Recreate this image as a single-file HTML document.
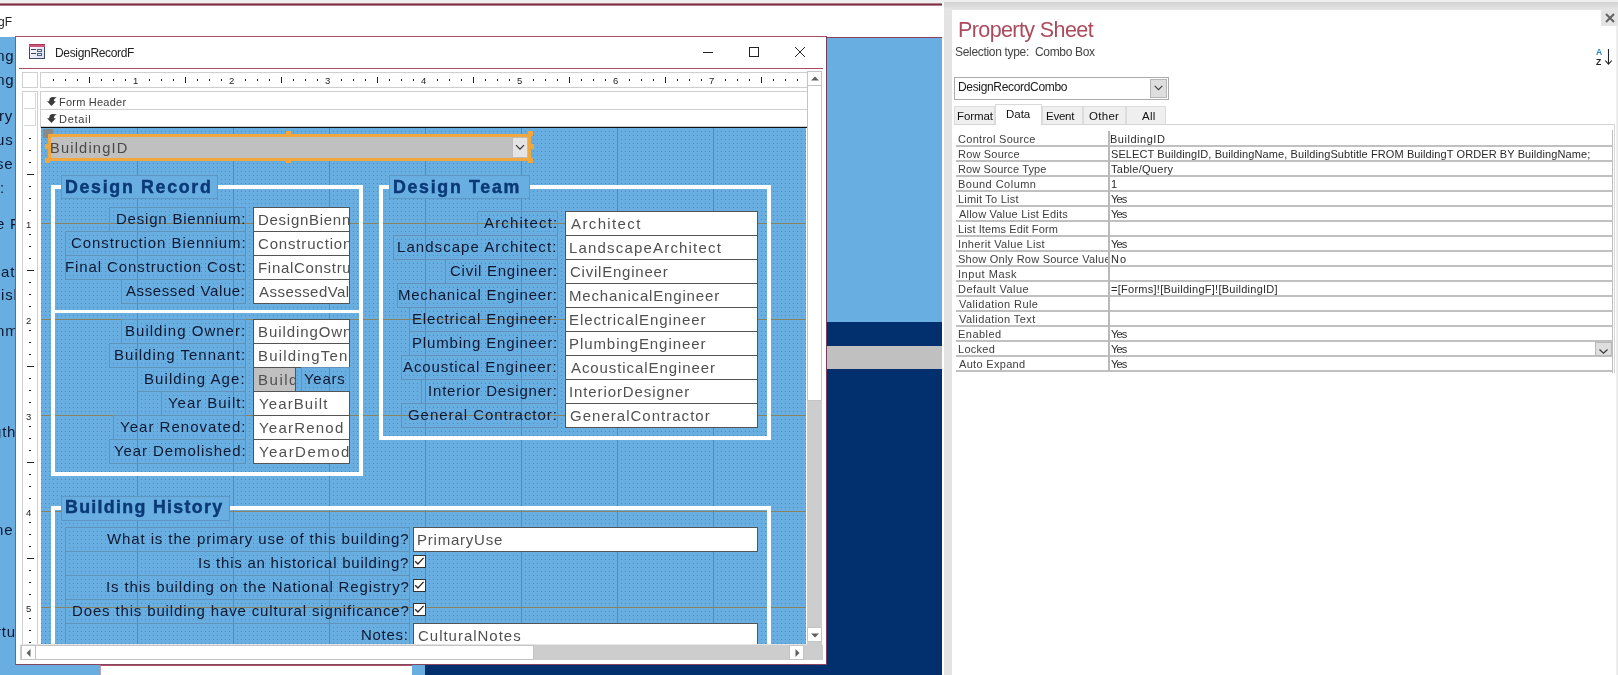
<!DOCTYPE html><html lang="en"><head><meta charset="utf-8"><title>DesignRecordF - Property Sheet</title><style>

html,body{margin:0;padding:0;overflow:hidden}
body{width:1618px;height:675px;overflow:hidden;background:#fff;position:relative;font-family:"Liberation Sans", sans-serif;}
div,span,svg{position:absolute;box-sizing:border-box}
span.t{white-space:pre;line-height:1;display:block;will-change:transform}
i.b{display:inline-block;width:0;height:0}

</style></head><body>
<div style="left:0px;top:0px;width:1618px;height:3px;background:#efefef"></div>
<div style="left:0px;top:3px;width:942px;height:1px;background:#b1818d"></div>
<div style="left:0px;top:4px;width:942px;height:1px;background:#7f2a40"></div>
<div style="left:0px;top:5px;width:942px;height:1px;background:#b27f8c"></div>
<div style="left:0px;top:6px;width:942px;height:31px;background:#fff"></div>
<div style="left:0px;top:37px;width:942px;height:638px;background:#69aee0"></div>
<div style="left:827px;top:37px;width:115px;height:1px;background:#8d4058"></div>
<div style="left:425px;top:322px;width:517px;height:353px;background:#022f6d"></div>
<div style="left:425px;top:346px;width:517px;height:23px;background:#c0c0c0"></div>
<div style="left:100px;top:665px;width:312px;height:10px;background:#fff;border-top:1px solid #a8505f;border-left:1px solid #c8a0a8"></div>
<div style="left:0px;top:37px;width:15px;height:638px;overflow:hidden">
<span class="t" style="left:0.00px;top:11.00px;font-size:15px;color:#0e1832;left:auto;right:1px;letter-spacing:0.8px;">ing</span>
<span class="t" style="left:0.00px;top:35.00px;font-size:15px;color:#0e1832;left:auto;right:1px;letter-spacing:0.8px;">ing</span>
<span class="t" style="left:0.00px;top:71.00px;font-size:15px;color:#0e1832;left:auto;right:1.5px;letter-spacing:0.8px;">ry</span>
<span class="t" style="left:0.00px;top:95.00px;font-size:15px;color:#0e1832;left:auto;right:1.5px;letter-spacing:0.8px;">us</span>
<span class="t" style="left:0.00px;top:119.00px;font-size:15px;color:#0e1832;left:auto;right:1.5px;letter-spacing:0.8px;">se</span>
<span class="t" style="left:0.00px;top:143.00px;font-size:15px;color:#0e1832;left:auto;right:10.5px;letter-spacing:0.8px;">:</span>
<span class="t" style="left:0.00px;top:179.00px;font-size:15px;color:#0e1832;left:auto;right:-9.5px;letter-spacing:0.8px;">e Fi</span>
<span class="t" style="left:0.00px;top:227.00px;font-size:15px;color:#0e1832;left:auto;right:0px;letter-spacing:0.8px;">at</span>
<span class="t" style="left:0.00px;top:250.00px;font-size:15px;color:#0e1832;left:auto;right:-7.5px;letter-spacing:0.8px;">ish</span>
<span class="t" style="left:0.00px;top:286.00px;font-size:15px;color:#0e1832;left:auto;right:-3px;letter-spacing:0.8px;">nm</span>
<span class="t" style="left:0.00px;top:387.00px;font-size:15px;color:#0e1832;left:auto;right:-1px;letter-spacing:0.8px;">gth</span>
<span class="t" style="left:0.00px;top:485.00px;font-size:15px;color:#0e1832;left:auto;right:1.5px;letter-spacing:0.8px;">ne</span>
<span class="t" style="left:0.00px;top:587.00px;font-size:15px;color:#0e1832;left:auto;right:-0.5px;letter-spacing:0.8px;">rtu</span></div>
<div style="left:15px;top:36px;width:812px;height:629px;background:#fff;border:1px solid #a8505f;border-right-color:#7a3d5c;border-bottom-color:#8a4560;"><svg style="left:13px;top:7px" width="16" height="15" viewBox="0 0 16 15">
<defs><linearGradient id="ig" x1="0" y1="0" x2="1" y2="1"><stop offset="0" stop-color="#fcfcff"/><stop offset="1" stop-color="#d9dcec"/></linearGradient></defs>
<rect x="0.5" y="0.5" width="15" height="14" fill="url(#ig)" stroke="#3f4a66"/>
<rect x="0" y="0" width="16" height="3" fill="#c9587a"/><rect x="0" y="0" width="16" height="1" fill="#a8395b"/>
<rect x="2" y="5" width="5" height="1" fill="#3c465c"/><rect x="2" y="9" width="5" height="1" fill="#3c465c"/>
<rect x="8.5" y="5.5" width="4" height="2" fill="#e8edf6" stroke="#4a6486"/><rect x="8.5" y="9.5" width="4" height="2" fill="#e8edf6" stroke="#4a6486"/>
</svg>
<svg style="left:680px;top:5px" width="120" height="22" viewBox="0 0 120 22">
<path d="M7 10.5H17" stroke="#222" stroke-width="1" fill="none"/>
<rect x="53.5" y="5.5" width="9" height="9" stroke="#222" stroke-width="1" fill="none"/>
<path d="M99 5L109 15M109 5L99 15" stroke="#222" stroke-width="1" fill="none"/>
</svg>
<div style="left:3px;top:31px;width:804px;height:1px;background:#a8505f"></div>
<div style="left:6px;top:35px;width:16px;height:16px;background:#fff;border:1px solid #cfcfcf"></div>
<div style="left:24px;top:35px;width:767px;height:16px;background:#fff;border:1px solid #cfcfcf;border-right:none;overflow:hidden"><svg style="left:-1px;top:-1px" width="767" height="16"><rect x="13" y="7" width="1" height="2" fill="#222"/><rect x="25" y="7" width="1" height="2" fill="#222"/><rect x="37" y="7" width="1" height="2" fill="#222"/><rect x="49" y="5" width="1" height="6" fill="#222"/><rect x="61" y="7" width="1" height="2" fill="#222"/><rect x="73" y="7" width="1" height="2" fill="#222"/><rect x="85" y="7" width="1" height="2" fill="#222"/><rect x="109" y="7" width="1" height="2" fill="#222"/><rect x="121" y="7" width="1" height="2" fill="#222"/><rect x="133" y="7" width="1" height="2" fill="#222"/><rect x="145" y="5" width="1" height="6" fill="#222"/><rect x="157" y="7" width="1" height="2" fill="#222"/><rect x="169" y="7" width="1" height="2" fill="#222"/><rect x="181" y="7" width="1" height="2" fill="#222"/><rect x="205" y="7" width="1" height="2" fill="#222"/><rect x="217" y="7" width="1" height="2" fill="#222"/><rect x="229" y="7" width="1" height="2" fill="#222"/><rect x="241" y="5" width="1" height="6" fill="#222"/><rect x="253" y="7" width="1" height="2" fill="#222"/><rect x="265" y="7" width="1" height="2" fill="#222"/><rect x="277" y="7" width="1" height="2" fill="#222"/><rect x="301" y="7" width="1" height="2" fill="#222"/><rect x="313" y="7" width="1" height="2" fill="#222"/><rect x="325" y="7" width="1" height="2" fill="#222"/><rect x="337" y="5" width="1" height="6" fill="#222"/><rect x="349" y="7" width="1" height="2" fill="#222"/><rect x="361" y="7" width="1" height="2" fill="#222"/><rect x="373" y="7" width="1" height="2" fill="#222"/><rect x="397" y="7" width="1" height="2" fill="#222"/><rect x="409" y="7" width="1" height="2" fill="#222"/><rect x="421" y="7" width="1" height="2" fill="#222"/><rect x="433" y="5" width="1" height="6" fill="#222"/><rect x="445" y="7" width="1" height="2" fill="#222"/><rect x="457" y="7" width="1" height="2" fill="#222"/><rect x="469" y="7" width="1" height="2" fill="#222"/><rect x="493" y="7" width="1" height="2" fill="#222"/><rect x="505" y="7" width="1" height="2" fill="#222"/><rect x="517" y="7" width="1" height="2" fill="#222"/><rect x="529" y="5" width="1" height="6" fill="#222"/><rect x="541" y="7" width="1" height="2" fill="#222"/><rect x="553" y="7" width="1" height="2" fill="#222"/><rect x="565" y="7" width="1" height="2" fill="#222"/><rect x="589" y="7" width="1" height="2" fill="#222"/><rect x="601" y="7" width="1" height="2" fill="#222"/><rect x="613" y="7" width="1" height="2" fill="#222"/><rect x="625" y="5" width="1" height="6" fill="#222"/><rect x="637" y="7" width="1" height="2" fill="#222"/><rect x="649" y="7" width="1" height="2" fill="#222"/><rect x="661" y="7" width="1" height="2" fill="#222"/><rect x="685" y="7" width="1" height="2" fill="#222"/><rect x="697" y="7" width="1" height="2" fill="#222"/><rect x="709" y="7" width="1" height="2" fill="#222"/><rect x="721" y="5" width="1" height="6" fill="#222"/><rect x="733" y="7" width="1" height="2" fill="#222"/><rect x="745" y="7" width="1" height="2" fill="#222"/><rect x="757" y="7" width="1" height="2" fill="#222"/></svg>
<span class="t" style="left:93.00px;top:4.00px;font-size:9.5px;color:#222;margin:-1px 0 0 -1px;">1</span>
<span class="t" style="left:189.00px;top:4.00px;font-size:9.5px;color:#222;margin:-1px 0 0 -1px;">2</span>
<span class="t" style="left:285.00px;top:4.00px;font-size:9.5px;color:#222;margin:-1px 0 0 -1px;">3</span>
<span class="t" style="left:381.00px;top:4.00px;font-size:9.5px;color:#222;margin:-1px 0 0 -1px;">4</span>
<span class="t" style="left:477.00px;top:4.00px;font-size:9.5px;color:#222;margin:-1px 0 0 -1px;">5</span>
<span class="t" style="left:573.00px;top:4.00px;font-size:9.5px;color:#222;margin:-1px 0 0 -1px;">6</span>
<span class="t" style="left:669.00px;top:4.00px;font-size:9.5px;color:#222;margin:-1px 0 0 -1px;">7</span></div>
<div style="left:6px;top:54px;width:16px;height:554px;background:#fff;border:1px solid #cfcfcf"></div>
<div style="left:8px;top:56px;width:12px;height:16px;background:#fff;border:1px solid #d8d8d8;border-top:none;border-left:none"></div>
<div style="left:8px;top:73px;width:12px;height:16px;background:#fff;border:1px solid #d8d8d8;border-top:none;border-left:none"></div>
<div style="left:24px;top:54px;width:767px;height:37px;background:#fff;border:1px solid #cfcfcf;border-right:none;border-bottom:none"></div>
<div style="left:25px;top:72px;width:766px;height:1px;background:#cfcfcf"></div>
<div style="left:25px;top:89px;width:766px;height:1px;background:#cfcfcf"></div>
<div style="left:25px;top:90px;width:766px;height:1px;background:#111"></div>
<svg style="left:31px;top:60px" width="11" height="10" viewBox="0 0 11 10"><path d="M0 4.3 L2.2 4.3 C2.1 2 3.2 0.2 5.2 0 L9.9 0.2 C8 0.9 6.9 2.2 6.8 4.3 L8.9 4.3 L4.5 8.9 Z" fill="#3a3a3a"/></svg>
<svg style="left:31px;top:77px" width="11" height="10" viewBox="0 0 11 10"><path d="M0 4.3 L2.2 4.3 C2.1 2 3.2 0.2 5.2 0 L9.9 0.2 C8 0.9 6.9 2.2 6.8 4.3 L8.9 4.3 L4.5 8.9 Z" fill="#3a3a3a"/></svg>
<svg style="left:7px;top:91px" width="14" height="516"><rect x="6" y="10" width="2" height="1" fill="#222"/><rect x="6" y="22" width="2" height="1" fill="#222"/><rect x="6" y="34" width="2" height="1" fill="#222"/><rect x="4" y="46" width="7" height="1" fill="#222"/><rect x="6" y="58" width="2" height="1" fill="#222"/><rect x="6" y="70" width="2" height="1" fill="#222"/><rect x="6" y="82" width="2" height="1" fill="#222"/><rect x="6" y="106" width="2" height="1" fill="#222"/><rect x="6" y="118" width="2" height="1" fill="#222"/><rect x="6" y="130" width="2" height="1" fill="#222"/><rect x="4" y="142" width="7" height="1" fill="#222"/><rect x="6" y="154" width="2" height="1" fill="#222"/><rect x="6" y="166" width="2" height="1" fill="#222"/><rect x="6" y="178" width="2" height="1" fill="#222"/><rect x="6" y="202" width="2" height="1" fill="#222"/><rect x="6" y="214" width="2" height="1" fill="#222"/><rect x="6" y="226" width="2" height="1" fill="#222"/><rect x="4" y="238" width="7" height="1" fill="#222"/><rect x="6" y="250" width="2" height="1" fill="#222"/><rect x="6" y="262" width="2" height="1" fill="#222"/><rect x="6" y="274" width="2" height="1" fill="#222"/><rect x="6" y="298" width="2" height="1" fill="#222"/><rect x="6" y="310" width="2" height="1" fill="#222"/><rect x="6" y="322" width="2" height="1" fill="#222"/><rect x="4" y="334" width="7" height="1" fill="#222"/><rect x="6" y="346" width="2" height="1" fill="#222"/><rect x="6" y="358" width="2" height="1" fill="#222"/><rect x="6" y="370" width="2" height="1" fill="#222"/><rect x="6" y="394" width="2" height="1" fill="#222"/><rect x="6" y="406" width="2" height="1" fill="#222"/><rect x="6" y="418" width="2" height="1" fill="#222"/><rect x="4" y="430" width="7" height="1" fill="#222"/><rect x="6" y="442" width="2" height="1" fill="#222"/><rect x="6" y="454" width="2" height="1" fill="#222"/><rect x="6" y="466" width="2" height="1" fill="#222"/><rect x="6" y="490" width="2" height="1" fill="#222"/><rect x="6" y="502" width="2" height="1" fill="#222"/><rect x="6" y="514" width="2" height="1" fill="#222"/></svg>
<div style="left:25px;top:91px;width:765px;height:516px;background:#69aee0;overflow:hidden"><svg style="left:0;top:0" width="765" height="516">
<defs><pattern id="dots" x="0" y="-1" width="4" height="4" patternUnits="userSpaceOnUse"><rect x="0" y="0" width="1" height="1" fill="#5f7f99" fill-opacity="0.8"/></pattern></defs>
<rect width="765" height="516" fill="url(#dots)"/>
<rect x="96" y="0" width="1" height="516" fill="#888262"/><rect x="192" y="0" width="1" height="516" fill="#888262"/><rect x="288" y="0" width="1" height="516" fill="#888262"/><rect x="384" y="0" width="1" height="516" fill="#888262"/><rect x="480" y="0" width="1" height="516" fill="#888262"/><rect x="576" y="0" width="1" height="516" fill="#888262"/><rect x="672" y="0" width="1" height="516" fill="#888262"/>
<rect x="0" y="95" width="765" height="1" fill="#888262"/><rect x="0" y="191" width="765" height="1" fill="#888262"/><rect x="0" y="287" width="765" height="1" fill="#888262"/><rect x="0" y="383" width="765" height="1" fill="#888262"/><rect x="0" y="479" width="765" height="1" fill="#888262"/>
</svg>
<div style="left:10px;top:57px;width:312px;height:291px;border:4px solid #fff"></div>
<div style="left:10px;top:182px;width:312px;height:3px;background:#fff"></div>
<div style="left:338px;top:57px;width:392px;height:255px;border:4px solid #fff"></div>
<div style="left:10px;top:378px;width:720px;height:194px;border:4px solid #fff"></div>
<div style="left:20px;top:47px;width:157px;height:24px;background:#69aee0;border:1px solid #5f97c4"></div>
<div style="left:348px;top:47px;width:141px;height:24px;background:#69aee0;border:1px solid #5f97c4"></div>
<div style="left:20px;top:368px;width:169px;height:25px;background:#69aee0;border:1px solid #5f97c4"></div>
<div style="left:68px;top:79px;width:137px;height:25px;border:1px solid #6292bb"></div>
<div style="left:212px;top:79px;width:97px;height:25px;background:#fff;border:1px solid #545454;overflow:hidden">
<span class="t" style="left:3.63px;top:3.80px;font-size:15px;color:#505050;letter-spacing:0.722px;">DesignBiennium</span></div>
<div style="left:24px;top:103px;width:181px;height:25px;border:1px solid #6292bb"></div>
<div style="left:212px;top:103px;width:97px;height:25px;background:#fff;border:1px solid #545454;overflow:hidden">
<span class="t" style="left:4.10px;top:3.80px;font-size:15px;color:#505050;letter-spacing:0.835px;">ConstructionBiennium</span></div>
<div style="left:24px;top:127px;width:181px;height:25px;border:1px solid #6292bb"></div>
<div style="left:212px;top:127px;width:97px;height:25px;background:#fff;border:1px solid #545454;overflow:hidden">
<span class="t" style="left:3.63px;top:3.80px;font-size:15px;color:#505050;letter-spacing:0.695px;">FinalConstructionCost</span></div>
<div style="left:80px;top:151px;width:125px;height:25px;border:1px solid #6292bb"></div>
<div style="left:212px;top:151px;width:97px;height:25px;background:#fff;border:1px solid #545454;overflow:hidden">
<span class="t" style="left:4.80px;top:3.80px;font-size:15px;color:#505050;letter-spacing:0.459px;">AssessedValue</span></div>
<div style="left:80px;top:191px;width:125px;height:25px;border:1px solid #6292bb"></div>
<div style="left:212px;top:191px;width:97px;height:25px;background:#fff;border:1px solid #545454;overflow:hidden">
<span class="t" style="left:3.63px;top:3.80px;font-size:15px;color:#505050;letter-spacing:0.924px;">BuildingOwner</span></div>
<div style="left:68px;top:215px;width:137px;height:25px;border:1px solid #6292bb"></div>
<div style="left:212px;top:215px;width:97px;height:25px;background:#fff;border:1px solid #545454;overflow:hidden">
<span class="t" style="left:3.63px;top:3.80px;font-size:15px;color:#505050;letter-spacing:1.186px;">BuildingTennant</span></div>
<div style="left:96px;top:239px;width:109px;height:25px;border:1px solid #6292bb"></div>
<div style="left:212px;top:239px;width:43px;height:25px;background:#c0c0c0;border:1px solid #545454;overflow:hidden">
<span class="t" style="left:3.63px;top:3.80px;font-size:15px;color:#505050;letter-spacing:1.516px;">BuildingAge</span></div>
<div style="left:260px;top:239px;width:49px;height:25px;border:1px solid #6292bb"></div>
<div style="left:120px;top:263px;width:85px;height:25px;border:1px solid #6292bb"></div>
<div style="left:212px;top:263px;width:97px;height:25px;background:#fff;border:1px solid #545454;overflow:hidden">
<span class="t" style="left:4.57px;top:3.80px;font-size:15px;color:#505050;letter-spacing:1.112px;">YearBuilt</span></div>
<div style="left:72px;top:287px;width:133px;height:25px;border:1px solid #6292bb"></div>
<div style="left:212px;top:287px;width:97px;height:25px;background:#fff;border:1px solid #545454;overflow:hidden">
<span class="t" style="left:4.57px;top:3.80px;font-size:15px;color:#505050;letter-spacing:1.221px;">YearRenod</span></div>
<div style="left:68px;top:311px;width:137px;height:25px;border:1px solid #6292bb"></div>
<div style="left:212px;top:311px;width:97px;height:25px;background:#fff;border:1px solid #545454;overflow:hidden">
<span class="t" style="left:4.57px;top:3.80px;font-size:15px;color:#505050;letter-spacing:1.452px;">YearDemod</span></div>
<div style="left:436px;top:83px;width:81px;height:25px;border:1px solid #6292bb"></div>
<div style="left:524px;top:83px;width:193px;height:25px;background:#fff;border:1px solid #545454;overflow:hidden">
<span class="t" style="left:4.60px;top:3.70px;font-size:15px;color:#505050;letter-spacing:1.375px;">Architect</span></div>
<div style="left:352px;top:107px;width:165px;height:25px;border:1px solid #6292bb"></div>
<div style="left:524px;top:107px;width:193px;height:25px;background:#fff;border:1px solid #545454;overflow:hidden">
<span class="t" style="left:3.43px;top:3.70px;font-size:15px;color:#505050;letter-spacing:1.181px;">LandscapeArchitect</span></div>
<div style="left:404px;top:131px;width:113px;height:25px;border:1px solid #6292bb"></div>
<div style="left:524px;top:131px;width:193px;height:25px;background:#fff;border:1px solid #545454;overflow:hidden">
<span class="t" style="left:3.90px;top:3.70px;font-size:15px;color:#505050;letter-spacing:0.775px;">CivilEngineer</span></div>
<div style="left:356px;top:155px;width:161px;height:25px;border:1px solid #6292bb"></div>
<div style="left:524px;top:155px;width:193px;height:25px;background:#fff;border:1px solid #545454;overflow:hidden">
<span class="t" style="left:3.43px;top:3.70px;font-size:15px;color:#505050;letter-spacing:0.837px;">MechanicalEngineer</span></div>
<div style="left:368px;top:179px;width:149px;height:25px;border:1px solid #6292bb"></div>
<div style="left:524px;top:179px;width:193px;height:25px;background:#fff;border:1px solid #545454;overflow:hidden">
<span class="t" style="left:3.43px;top:3.70px;font-size:15px;color:#505050;letter-spacing:0.915px;">ElectricalEngineer</span></div>
<div style="left:368px;top:203px;width:149px;height:25px;border:1px solid #6292bb"></div>
<div style="left:524px;top:203px;width:193px;height:25px;background:#fff;border:1px solid #545454;overflow:hidden">
<span class="t" style="left:3.43px;top:3.70px;font-size:15px;color:#505050;letter-spacing:0.924px;">PlumbingEngineer</span></div>
<div style="left:360px;top:227px;width:157px;height:25px;border:1px solid #6292bb"></div>
<div style="left:524px;top:227px;width:193px;height:25px;background:#fff;border:1px solid #545454;overflow:hidden">
<span class="t" style="left:4.60px;top:3.70px;font-size:15px;color:#505050;letter-spacing:0.916px;">AcousticalEngineer</span></div>
<div style="left:380px;top:251px;width:137px;height:25px;border:1px solid #6292bb"></div>
<div style="left:524px;top:251px;width:193px;height:25px;background:#fff;border:1px solid #545454;overflow:hidden">
<span class="t" style="left:3.43px;top:3.70px;font-size:15px;color:#505050;letter-spacing:0.895px;">InteriorDesigner</span></div>
<div style="left:360px;top:275px;width:157px;height:25px;border:1px solid #6292bb"></div>
<div style="left:524px;top:275px;width:193px;height:25px;background:#fff;border:1px solid #545454;overflow:hidden">
<span class="t" style="left:3.90px;top:3.70px;font-size:15px;color:#505050;letter-spacing:1.018px;">GeneralContractor</span></div>
<div style="left:24px;top:399px;width:345px;height:25px;border:1px solid #6292bb"></div>
<div style="left:24px;top:423px;width:345px;height:25px;border:1px solid #6292bb"></div>
<div style="left:372px;top:427px;width:13px;height:13px;background:#fff;border:1px solid #333"><svg style="left:0;top:0" width="11" height="11" viewBox="0 0 11 11"><path d="M1.2 5.2L3.9 8L9.6 1.9" stroke="#2e2626" stroke-width="1.3" fill="none"/></svg></div>
<div style="left:24px;top:447px;width:345px;height:25px;border:1px solid #6292bb"></div>
<div style="left:372px;top:451px;width:13px;height:13px;background:#fff;border:1px solid #333"><svg style="left:0;top:0" width="11" height="11" viewBox="0 0 11 11"><path d="M1.2 5.2L3.9 8L9.6 1.9" stroke="#2e2626" stroke-width="1.3" fill="none"/></svg></div>
<div style="left:24px;top:471px;width:345px;height:25px;border:1px solid #6292bb"></div>
<div style="left:372px;top:475px;width:13px;height:13px;background:#fff;border:1px solid #333"><svg style="left:0;top:0" width="11" height="11" viewBox="0 0 11 11"><path d="M1.2 5.2L3.9 8L9.6 1.9" stroke="#2e2626" stroke-width="1.3" fill="none"/></svg></div>
<div style="left:24px;top:495px;width:345px;height:25px;border:1px solid #6292bb"></div>
<div style="left:372px;top:399px;width:345px;height:25px;background:#fff;border:1px solid #545454;overflow:hidden">
<span class="t" style="left:3.33px;top:3.80px;font-size:15px;color:#505050;letter-spacing:0.771px;">PrimaryUse</span></div>
<div style="left:372px;top:495px;width:345px;height:25px;background:#fff;border:1px solid #545454;overflow:hidden">
<span class="t" style="left:4.10px;top:3.80px;font-size:15px;color:#505050;letter-spacing:0.983px;">CulturalNotes</span></div>
<div style="left:2px;top:1px;width:10px;height:9px;background:#8a8a8a"></div>
<div style="left:7px;top:6px;width:483px;height:27px;background:#c0c0c0;border:3px solid #f2a73d"></div>
<div style="left:471px;top:9px;width:16px;height:21px;background:#e4e4e4;border:1px solid #bdbdbd"><svg style="left:2px;top:6px" width="10" height="7" viewBox="0 0 10 7"><path d="M1 1.2L5 5.2L9 1.2" stroke="#333" stroke-width="1.2" fill="none"/></svg></div>
<div style="left:245px;top:3px;width:5px;height:5px;background:#f2a73d"></div>
<div style="left:245px;top:30px;width:5px;height:5px;background:#f2a73d"></div>
<div style="left:487px;top:3px;width:5px;height:5px;background:#f2a73d"></div>
<div style="left:488px;top:16px;width:5px;height:5px;background:#f2a73d"></div>
<div style="left:487px;top:30px;width:5px;height:5px;background:#f2a73d"></div>
<div style="left:4px;top:16px;width:5px;height:5px;background:#f2a73d"></div>
<div style="left:4px;top:30px;width:5px;height:5px;background:#f2a73d"></div>
<span class="t" style="left:24.19px;top:50.50px;font-size:17.8px;color:#0a3977;font-weight:700;letter-spacing:1.695px;-webkit-text-stroke:0.45px #0a3977;">Design Record</span>
<span class="t" style="left:352.39px;top:50.50px;font-size:17.8px;color:#0a3977;font-weight:700;letter-spacing:1.693px;-webkit-text-stroke:0.45px #0a3977;">Design Team</span>
<span class="t" style="left:24.19px;top:371.30px;font-size:17.8px;color:#0a3977;font-weight:700;letter-spacing:1.316px;-webkit-text-stroke:0.45px #0a3977;">Building History</span>
<span class="t" style="left:74.83px;top:82.80px;font-size:15px;color:#0e1832;letter-spacing:0.791px;">Design Biennium:</span>
<span class="t" style="left:29.60px;top:106.80px;font-size:15px;color:#0e1832;letter-spacing:0.932px;">Construction Biennium:</span>
<span class="t" style="left:23.63px;top:130.80px;font-size:15px;color:#0e1832;letter-spacing:0.894px;">Final Construction Cost:</span>
<span class="t" style="left:85.30px;top:154.80px;font-size:15px;color:#0e1832;letter-spacing:0.596px;">Assessed Value:</span>
<span class="t" style="left:84.13px;top:194.80px;font-size:15px;color:#0e1832;letter-spacing:1.017px;">Building Owner:</span>
<span class="t" style="left:72.83px;top:218.80px;font-size:15px;color:#0e1832;letter-spacing:1.021px;">Building Tennant:</span>
<span class="t" style="left:102.83px;top:242.80px;font-size:15px;color:#0e1832;letter-spacing:1.086px;">Building Age:</span>
<span class="t" style="left:263.27px;top:242.80px;font-size:15px;color:#0e1832;letter-spacing:0.724px;">Years</span>
<span class="t" style="left:126.77px;top:266.80px;font-size:15px;color:#0e1832;letter-spacing:0.967px;">Year Built:</span>
<span class="t" style="left:78.77px;top:290.80px;font-size:15px;color:#0e1832;letter-spacing:1.021px;">Year Renovated:</span>
<span class="t" style="left:72.57px;top:314.80px;font-size:15px;color:#0e1832;letter-spacing:0.923px;">Year Demolished:</span>
<span class="t" style="left:442.80px;top:86.85px;font-size:15px;color:#0e1832;letter-spacing:1.182px;">Architect:</span>
<span class="t" style="left:355.83px;top:110.85px;font-size:15px;color:#0e1832;letter-spacing:1.055px;">Landscape Architect:</span>
<span class="t" style="left:408.80px;top:134.85px;font-size:15px;color:#0e1832;letter-spacing:0.746px;">Civil Engineer:</span>
<span class="t" style="left:357.13px;top:158.85px;font-size:15px;color:#0e1832;letter-spacing:0.767px;">Mechanical Engineer:</span>
<span class="t" style="left:370.83px;top:182.85px;font-size:15px;color:#0e1832;letter-spacing:0.837px;">Electrical Engineer:</span>
<span class="t" style="left:370.83px;top:206.85px;font-size:15px;color:#0e1832;letter-spacing:0.836px;">Plumbing Engineer:</span>
<span class="t" style="left:362.30px;top:230.85px;font-size:15px;color:#0e1832;letter-spacing:0.890px;">Acoustical Engineer:</span>
<span class="t" style="left:387.13px;top:254.85px;font-size:15px;color:#0e1832;letter-spacing:0.810px;">Interior Designer:</span>
<span class="t" style="left:367.10px;top:278.85px;font-size:15px;color:#0e1832;letter-spacing:0.952px;">General Contractor:</span>
<span class="t" style="left:66.00px;top:402.80px;font-size:15px;color:#0e1832;letter-spacing:0.893px;">What is the primary use of this building?</span>
<span class="t" style="left:157.33px;top:426.80px;font-size:15px;color:#0e1832;letter-spacing:0.758px;">Is this an historical building?</span>
<span class="t" style="left:64.83px;top:450.80px;font-size:15px;color:#0e1832;letter-spacing:0.858px;">Is this building on the National Registry?</span>
<span class="t" style="left:30.83px;top:474.80px;font-size:15px;color:#0e1832;letter-spacing:0.852px;">Does this building have cultural significance?</span>
<span class="t" style="left:320.43px;top:498.80px;font-size:15px;color:#0e1832;letter-spacing:0.715px;">Notes:</span>
<span class="t" style="left:9.15px;top:12.80px;font-size:14.67px;color:#4a4a4a;letter-spacing:1.165px;">BuildingID</span></div>
<div style="left:791px;top:34px;width:15px;height:574px;background:#cdcdcd"></div>
<div style="left:791px;top:34px;width:15px;height:15px;background:#fff;border:1px solid #c4c4c4"><svg style="left:3px;top:4px" width="8" height="5" viewBox="0 0 8 5"><path d="M0 4.5L4 0.5L8 4.5Z" fill="#606060"/></svg></div>
<div style="left:791px;top:49px;width:15px;height:315px;background:#fff;border:1px solid #c4c4c4;border-top:none"></div>
<div style="left:791px;top:590px;width:15px;height:15px;background:#fff;border:1px solid #c4c4c4"><svg style="left:3px;top:5px" width="8" height="5" viewBox="0 0 8 5"><path d="M0 0.5L4 4.5L8 0.5Z" fill="#606060"/></svg></div>
<div style="left:4px;top:608px;width:803px;height:15px;background:#cdcdcd"></div>
<div style="left:4px;top:607px;width:787px;height:1px;background:#e4e4e4"></div>
<div style="left:5px;top:608px;width:15px;height:15px;background:#fff;border:1px solid #c4c4c4"><svg style="left:4px;top:2.5px" width="5" height="8" viewBox="0 0 5 8"><path d="M4.5 0L0.5 4L4.5 8Z" fill="#606060"/></svg></div>
<div style="left:20px;top:608px;width:498px;height:15px;background:#fff;border:1px solid #c4c4c4;border-left:none"></div>
<div style="left:773px;top:608px;width:15px;height:15px;background:#fff;border:1px solid #c4c4c4"><svg style="left:5px;top:2.5px" width="5" height="8" viewBox="0 0 5 8"><path d="M0.5 0L4.5 4L0.5 8Z" fill="#606060"/></svg></div>
<span class="t" style="left:9.70px;top:182.50px;font-size:9.5px;color:#222;">1</span>
<span class="t" style="left:9.70px;top:278.50px;font-size:9.5px;color:#222;">2</span>
<span class="t" style="left:9.70px;top:374.50px;font-size:9.5px;color:#222;">3</span>
<span class="t" style="left:9.70px;top:470.50px;font-size:9.5px;color:#222;">4</span>
<span class="t" style="left:9.70px;top:566.50px;font-size:9.5px;color:#222;">5</span></div>
<div style="left:942px;top:3px;width:676px;height:672px;background:#fff"></div>
<div style="left:944px;top:3px;width:674px;height:672px;background:#e3e3e3"></div>
<div style="left:944px;top:2px;width:674px;height:8px;background:linear-gradient(#d2d2d2,#e6e6e6)"></div>
<div style="left:952px;top:10px;width:666px;height:665px;background:#fff"><div style="left:664px;top:16px;width:2px;height:649px;background:linear-gradient(90deg,#f4f4f4,#e2e2e2)"></div>
<div style="left:649px;top:0px;width:17px;height:16px;background:#e4e4e4"><svg style="left:3.5px;top:3px" width="10" height="10" viewBox="0 0 10 10"><path d="M1 1L9 9M9 1L1 9" stroke="#636363" stroke-width="2" fill="none"/></svg></div>
<svg style="left:652px;top:38px" width="10" height="18" viewBox="0 0 10 18"><path d="M4.5 1V16M1.2 12.5L4.5 16.2L7.8 12.5" stroke="#222" stroke-width="1.1" fill="none"/></svg>
<div style="left:2px;top:67px;width:215px;height:23px;background:#fff;border:1px solid #ababab"></div>
<div style="left:198px;top:69px;width:17px;height:19px;background:#dedede;border:1px solid #b5b5b5"><svg style="left:3px;top:5px" width="9" height="6" viewBox="0 0 9 6"><path d="M0.7 0.8L4.5 4.6L8.3 0.8" stroke="#444" stroke-width="1.2" fill="none"/></svg></div>
<div style="left:2px;top:114px;width:661px;height:1px;background:#d4d4d4"></div>
<div style="left:662px;top:114px;width:1px;height:249px;background:#d6d6d6"></div>
<div style="left:2px;top:96px;width:41px;height:18px;background:#efefef;border:1px solid #dcdcdc;border-bottom:none"></div>
<div style="left:43px;top:94px;width:47px;height:21px;background:#fff;border:1px solid #d9d9d9;border-bottom:none"></div>
<div style="left:90px;top:96px;width:41px;height:18px;background:#efefef;border:1px solid #dcdcdc;border-bottom:none"></div>
<div style="left:131px;top:96px;width:43px;height:18px;background:#efefef;border:1px solid #dcdcdc;border-bottom:none"></div>
<div style="left:174px;top:96px;width:40px;height:18px;background:#efefef;border:1px solid #dcdcdc;border-bottom:none"></div>
<div style="left:660px;top:120px;width:1px;height:243px;background:#bdbdbd"></div>
<div style="left:4px;top:121px;width:152px;height:242px;overflow:hidden">
<span class="t" style="left:1.95px;top:3.00px;font-size:11px;color:#3d3d3d;letter-spacing:0.311px;">Control Source</span>
<span class="t" style="left:1.60px;top:18.00px;font-size:11px;color:#3d3d3d;letter-spacing:0.195px;">Row Source</span>
<span class="t" style="left:1.60px;top:33.00px;font-size:11px;color:#3d3d3d;letter-spacing:0.125px;">Row Source Type</span>
<span class="t" style="left:1.60px;top:48.00px;font-size:11px;color:#3d3d3d;letter-spacing:0.473px;">Bound Column</span>
<span class="t" style="left:1.60px;top:63.00px;font-size:11px;color:#3d3d3d;letter-spacing:0.215px;">Limit To List</span>
<span class="t" style="left:2.50px;top:78.00px;font-size:11px;color:#3d3d3d;letter-spacing:0.205px;">Allow Value List Edits</span>
<span class="t" style="left:1.60px;top:93.00px;font-size:11px;color:#3d3d3d;letter-spacing:0.106px;">List Items Edit Form</span>
<span class="t" style="left:1.50px;top:108.00px;font-size:11px;color:#3d3d3d;letter-spacing:0.326px;">Inherit Value List</span>
<span class="t" style="left:2.50px;top:123.00px;font-size:11px;color:#3d3d3d;letter-spacing:0.24px;margin-left:-0.5px;">Show Only Row Source Values</span>
<span class="t" style="left:1.50px;top:138.00px;font-size:11px;color:#3d3d3d;letter-spacing:0.528px;">Input Mask</span>
<span class="t" style="left:1.60px;top:153.00px;font-size:11px;color:#3d3d3d;letter-spacing:0.453px;">Default Value</span>
<span class="t" style="left:2.50px;top:168.00px;font-size:11px;color:#3d3d3d;letter-spacing:0.414px;">Validation Rule</span>
<span class="t" style="left:2.50px;top:183.00px;font-size:11px;color:#3d3d3d;letter-spacing:0.409px;">Validation Text</span>
<span class="t" style="left:1.60px;top:198.00px;font-size:11px;color:#3d3d3d;letter-spacing:0.466px;">Enabled</span>
<span class="t" style="left:1.60px;top:213.00px;font-size:11px;color:#3d3d3d;letter-spacing:0.279px;">Locked</span>
<span class="t" style="left:2.50px;top:228.00px;font-size:11px;color:#3d3d3d;letter-spacing:0.318px;">Auto Expand</span></div>
<div style="left:4px;top:135px;width:657px;height:2px;background:#c0c0c0"></div>
<div style="left:4px;top:150px;width:657px;height:2px;background:#c0c0c0"></div>
<div style="left:4px;top:165px;width:657px;height:2px;background:#c0c0c0"></div>
<div style="left:4px;top:180px;width:657px;height:2px;background:#c0c0c0"></div>
<div style="left:4px;top:195px;width:657px;height:2px;background:#c0c0c0"></div>
<div style="left:4px;top:210px;width:657px;height:2px;background:#c0c0c0"></div>
<div style="left:4px;top:225px;width:657px;height:2px;background:#c0c0c0"></div>
<div style="left:4px;top:240px;width:657px;height:2px;background:#c0c0c0"></div>
<div style="left:4px;top:255px;width:657px;height:2px;background:#c0c0c0"></div>
<div style="left:4px;top:270px;width:657px;height:2px;background:#c0c0c0"></div>
<div style="left:4px;top:285px;width:657px;height:2px;background:#c0c0c0"></div>
<div style="left:4px;top:300px;width:657px;height:2px;background:#c0c0c0"></div>
<div style="left:4px;top:315px;width:657px;height:2px;background:#c0c0c0"></div>
<div style="left:4px;top:330px;width:657px;height:2px;background:#c0c0c0"></div>
<div style="left:4px;top:345px;width:657px;height:2px;background:#c0c0c0"></div>
<div style="left:4px;top:360px;width:657px;height:2px;background:#c0c0c0"></div>
<div style="left:156px;top:121px;width:2px;height:240px;background:#b9b9b9"></div>
<div style="left:643px;top:332px;width:17px;height:14px;background:#dedede;border:1px solid #b9b9b9"><svg style="left:3px;top:6px" width="9" height="5" viewBox="0 0 9 5"><path d="M0.5 0.5L4.5 4.2L8.5 0.5" stroke="#333" stroke-width="1.1" fill="none"/></svg></div>
<span class="t" style="left:5.82px;top:10.00px;font-size:21.5px;color:#ac4a5e;letter-spacing:-0.601px;">Property Sheet</span>
<span class="t" style="left:3.30px;top:35.50px;font-size:12px;color:#444;letter-spacing:-0.319px;">Selection type:  Combo Box</span>
<span class="t" style="left:644.00px;top:38.40px;font-size:8.5px;color:#2f88c5;font-weight:700;">A</span>
<span class="t" style="left:644.00px;top:47.80px;font-size:8.5px;color:#222;font-weight:700;">Z</span>
<span class="t" style="left:5.55px;top:70.50px;font-size:12px;color:#1a1a1a;letter-spacing:-0.331px;">DesignRecordCombo</span>
<span class="t" style="left:4.90px;top:101.00px;font-size:11.5px;color:#111;letter-spacing:-0.095px;">Format</span>
<span class="t" style="left:53.60px;top:99.00px;font-size:11.5px;color:#111;letter-spacing:-0.032px;">Data</span>
<span class="t" style="left:94.40px;top:101.00px;font-size:11.5px;color:#111;letter-spacing:-0.240px;">Event</span>
<span class="t" style="left:137.30px;top:101.00px;font-size:11.5px;color:#111;letter-spacing:0.280px;">Other</span>
<span class="t" style="left:189.50px;top:101.00px;font-size:11.5px;color:#111;letter-spacing:0.237px;">All</span>
<span class="t" style="left:158.40px;top:124.00px;font-size:11px;color:#2a2a2a;letter-spacing:0.528px;">BuildingID</span>
<span class="t" style="left:158.85px;top:139.00px;font-size:11px;color:#2a2a2a;letter-spacing:0.092px;">SELECT BuildingID, BuildingName, BuildingSubtitle FROM BuildingT ORDER BY BuildingName;</span>
<span class="t" style="left:159.10px;top:154.00px;font-size:11px;color:#2a2a2a;letter-spacing:0.279px;">Table/Query</span>
<span class="t" style="left:159.30px;top:169.00px;font-size:11px;color:#2a2a2a;">1</span>
<span class="t" style="left:159.10px;top:184.00px;font-size:11px;color:#2a2a2a;letter-spacing:-0.797px;">Yes</span>
<span class="t" style="left:159.10px;top:199.00px;font-size:11px;color:#2a2a2a;letter-spacing:-0.797px;">Yes</span>
<span class="t" style="left:159.10px;top:229.00px;font-size:11px;color:#2a2a2a;letter-spacing:-0.797px;">Yes</span>
<span class="t" style="left:159.10px;top:244.00px;font-size:11px;color:#2a2a2a;letter-spacing:1.056px;">No</span>
<span class="t" style="left:158.80px;top:274.00px;font-size:11px;color:#2a2a2a;letter-spacing:0.269px;">=[Forms]![BuildingF]![BuildingID]</span>
<span class="t" style="left:159.10px;top:319.00px;font-size:11px;color:#2a2a2a;letter-spacing:-0.797px;">Yes</span>
<span class="t" style="left:159.10px;top:334.00px;font-size:11px;color:#2a2a2a;letter-spacing:-0.797px;">Yes</span>
<span class="t" style="left:159.10px;top:349.00px;font-size:11px;color:#2a2a2a;letter-spacing:-0.797px;">Yes</span></div>
<span class="t" style="left:-2.20px;top:15.80px;font-size:12px;color:#222;">gF</span>
<span class="t" style="left:55.05px;top:47.00px;font-size:12px;color:#222;letter-spacing:-0.328px;">DesignRecordF</span>
<span class="t" style="left:59.10px;top:96.50px;font-size:11px;color:#3c3c3c;letter-spacing:0.227px;">Form Header</span>
<span class="t" style="left:59.10px;top:113.50px;font-size:11px;color:#3c3c3c;letter-spacing:0.694px;">Detail</span>
</body></html>
